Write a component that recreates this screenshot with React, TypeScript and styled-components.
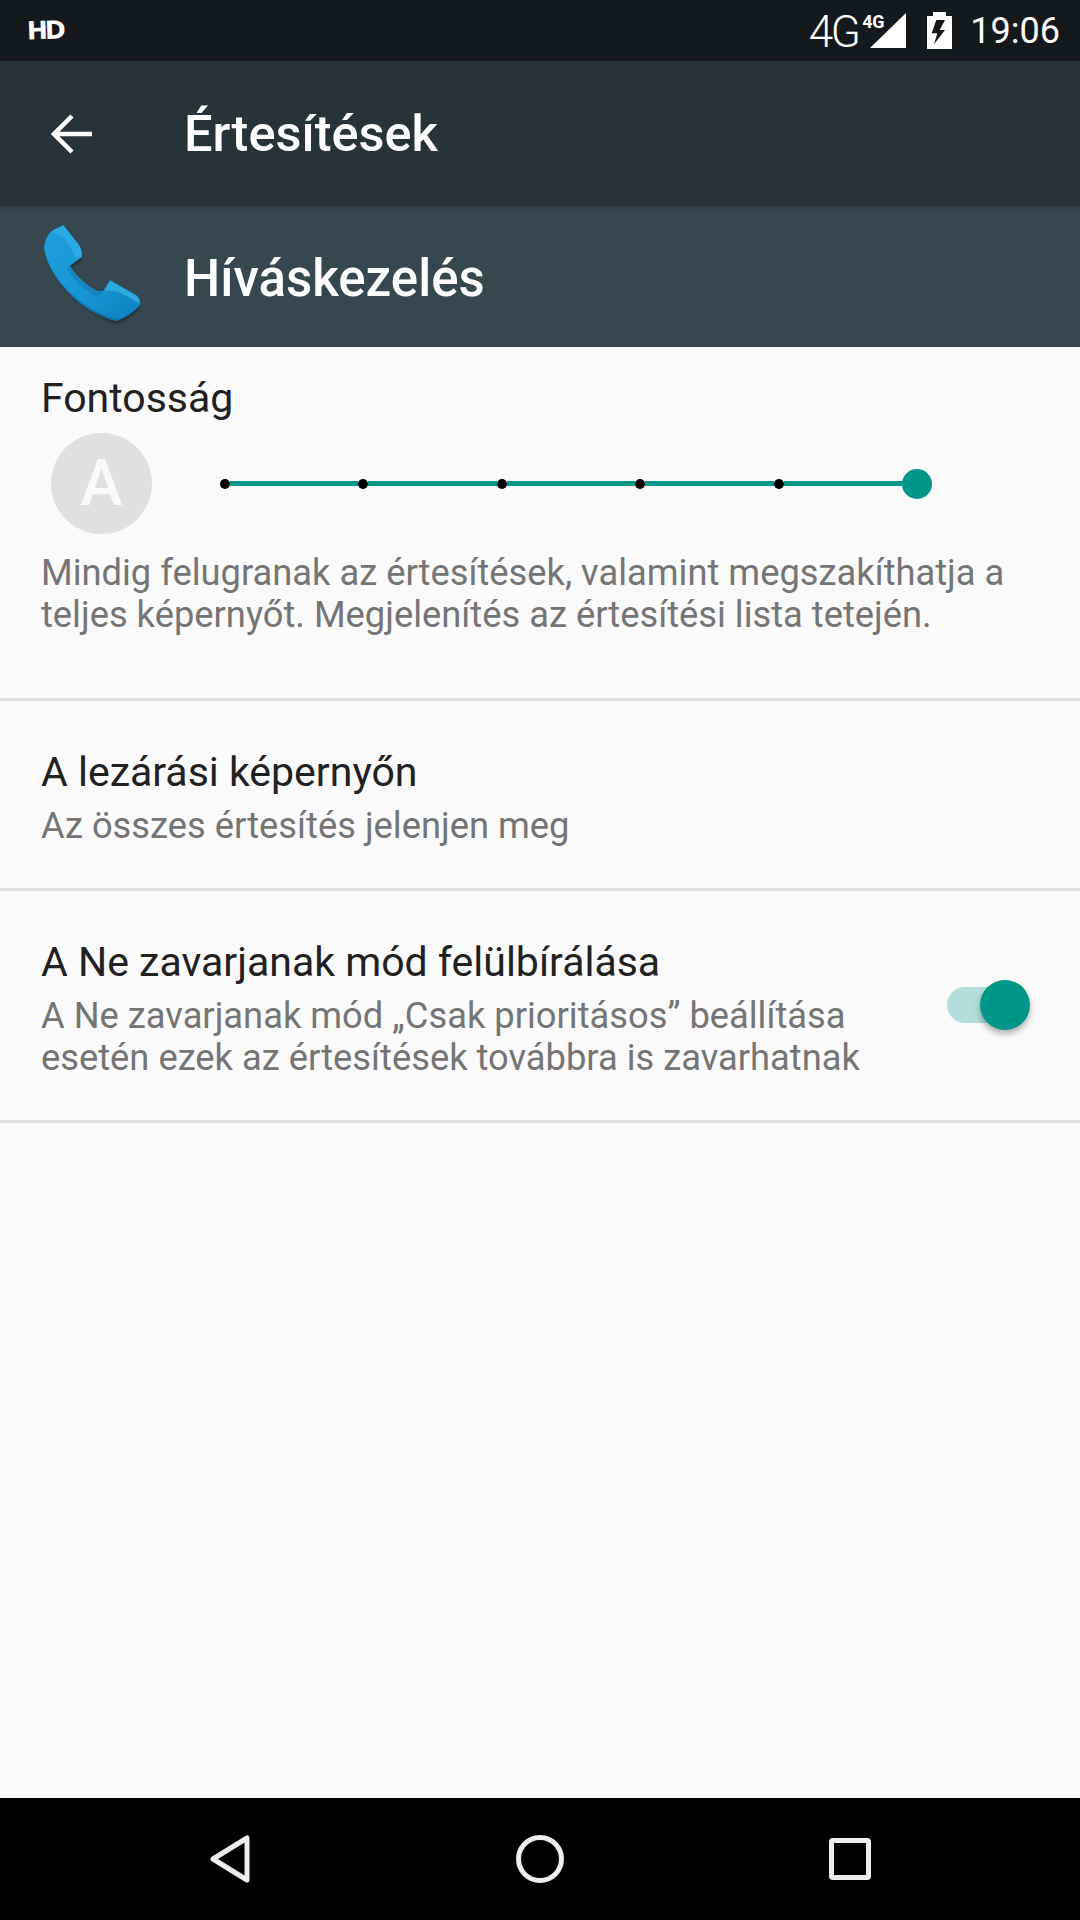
import styled, { createGlobalStyle } from "styled-components";

const GlobalStyle = createGlobalStyle`
  html, body {
    margin: 0;
    padding: 0;
    background: #fafafa;
    font-family: Roboto, "Noto Sans", sans-serif;
  }
`;

export default function App() {
  return (
    <>
      <GlobalStyle />
      <Screen>
        <StatusBar>
          <HdBadge>HD</HdBadge>
          <StatusRight>
            <NetworkLabel>4G</NetworkLabel>
            <SignalGroup>
              <SmallNetwork>4G</SmallNetwork>
              <svg width="36" height="35" viewBox="0 0 36 35">
                <path d="M36 0V35H0Z" fill="#fff" />
              </svg>
            </SignalGroup>
            <BatteryIcon viewBox="0 0 25 37" width="25" height="37">
              <path d="M6 0h13v4h6v33H0V4h6Z" fill="#fff" />
              <path d="M9.3 8H18l-5.3 10H18L7 32.3 10.3 21.3H4.7Z" fill="#15191c" />
            </BatteryIcon>
            <Clock>19:06</Clock>
          </StatusRight>
        </StatusBar>

        <Toolbar>
          <BackSlot>
            <svg width="42" height="42" viewBox="0 0 42 42">
              <path d="M41 21H4M21 3 3 21l18 18" fill="none" stroke="#fff" strokeWidth="4.5" />
            </svg>
          </BackSlot>
          <Title>Értesítések</Title>
        </Toolbar>

        <AppHeader>
          <PhoneSlot>
            <PhoneIcon />
          </PhoneSlot>
          <AppName>Híváskezelés</AppName>
        </AppHeader>

        <ImportanceSection>
          <RowTitle>Fontosság</RowTitle>
          <SliderRow>
            <Avatar>A</Avatar>
            <Slider>
              <Dot />
              <Segment />
              <Dot />
              <Segment />
              <Dot />
              <Segment />
              <Dot />
              <Segment />
              <Dot />
              <Segment />
              <Thumb />
            </Slider>
          </SliderRow>
          <ImportanceSummary>
            Mindig felugranak az értesítések, valamint megszakíthatja a teljes képernyőt. Megjelenítés az értesítési lista tetején.
          </ImportanceSummary>
        </ImportanceSection>

        <PlainRow>
          <RowTitle>A lezárási képernyőn</RowTitle>
          <RowSummary>Az összes értesítés jelenjen meg</RowSummary>
        </PlainRow>

        <SwitchRow>
          <SwitchText>
            <RowTitle>A Ne zavarjanak mód felülbírálása</RowTitle>
            <RowSummary>
              A Ne zavarjanak mód „Csak prioritásos” beállítása esetén ezek az értesítések továbbra is zavarhatnak
            </RowSummary>
          </SwitchText>
          <SwitchTrack>
            <SwitchThumb />
          </SwitchTrack>
        </SwitchRow>

        <Spacer />

        <NavBar>
          <svg width="42" height="50" viewBox="0 0 42 50">
            <path d="M38 4v42L4 25Z" fill="none" stroke="#eee" strokeWidth="5" strokeLinejoin="round" />
          </svg>
          <svg width="48" height="48" viewBox="0 0 48 48">
            <circle cx="24" cy="24" r="21.5" fill="none" stroke="#eee" strokeWidth="5" />
          </svg>
          <svg width="42" height="42" viewBox="0 0 42 42">
            <rect x="2.5" y="2.5" width="37" height="37" rx="1.5" fill="none" stroke="#eee" strokeWidth="5" />
          </svg>
        </NavBar>
      </Screen>
    </>
  );
}

// handset outline traced in 345-unit space over a 115px box
function PhoneIcon() {
  return (
    <svg width="115" height="115" viewBox="0 0 345 345">
      <defs>
        <linearGradient id="handset" x1="0" y1="0" x2="1" y2="1">
          <stop offset="0" stopColor="#1f9fdc" />
          <stop offset="0.55" stopColor="#1896d4" />
          <stop offset="1" stopColor="#0e7fbd" />
        </linearGradient>
        <filter id="soft" x="-20%" y="-20%" width="140%" height="140%">
          <feGaussianBlur stdDeviation="5" />
        </filter>
      </defs>
      <path
        d="M85 28 C70 36 52 44 44 52 C32 70 30 92 36 114 C52 172 92 222 146 262 C178 284 212 304 245 314 C272 304 300 284 318 266 L222 196 L205 222 L180 218 C152 200 128 176 108 148 L142 122 L132 80Z"
        fill="#000"
        opacity="0.35"
        filter="url(#soft)"
      />
      <path
        d="M85 18 C70 26 52 32 44 42 C32 58 26 76 28 92 C38 150 78 204 132 250 C164 276 205 298 245 306 C272 296 300 278 316 256 C316 246 312 236 304 228 L225 183 L205 215 C196 218 188 216 180 212 C150 194 124 170 105 140 L140 115 C142 100 138 88 130 75Z"
        fill="url(#handset)"
      />
      <path d="M85 20 C70 26 56 33 47 42 C58 42 72 44 84 54 C98 70 112 92 122 116 L140 113 C142 100 138 88 130 75Z" fill="#2babe3" />
      <path d="M226 185 L304 230 C312 238 316 246 314 254 C296 244 262 222 240 216 C228 216 218 214 208 214Z" fill="#2da9e0" />
      <path d="M105 142 C124 172 150 196 180 214 C188 218 196 220 205 216 C196 228 186 232 176 228 C146 212 118 184 96 150Z" fill="#1577ad" opacity="0.55" />
      <path d="M245 306 C272 296 300 278 316 256 C306 276 276 296 248 300 C208 292 168 272 132 244 C78 200 40 148 30 96 C38 150 78 204 132 250 C164 276 205 298 245 306Z" fill="#0c6ea6" opacity="0.7" />
    </svg>
  );
}

const Screen = styled.div`
  width: 1080px;
  height: 1920px;
  display: flex;
  flex-direction: column;
  overflow: hidden;
  background: #fafafa;
`;

const StatusBar = styled.div`
  height: 61px;
  flex: none;
  display: flex;
  align-items: center;
  justify-content: space-between;
  padding: 0 20px 0 27px;
  box-sizing: border-box;
  background: #15191c;
  color: #fff;
`;

const HdBadge = styled.div`
  font-family: "DejaVu Sans", sans-serif;
  font-size: 25px;
  font-weight: 700;
  line-height: 26px;
  letter-spacing: -3px;
  transform: rotate(-2deg);
`;

const StatusRight = styled.div`
  display: flex;
  align-items: center;
`;

const NetworkLabel = styled.div`
  font-size: 44px;
  font-weight: 300;
  letter-spacing: -2.5px;
  line-height: 40px;
  margin-top: 3px;
`;

const SignalGroup = styled.div`
  position: relative;
  display: flex;
  justify-content: flex-end;
  width: 47px;
  height: 36px;
  margin-left: 1px;
`;

const SmallNetwork = styled.div`
  position: absolute;
  left: 3px;
  top: 0;
  font-size: 18px;
  font-weight: 700;
  letter-spacing: -0.5px;
  line-height: 18px;
`;

const BatteryIcon = styled.svg`
  margin-left: 21px;
`;

const Clock = styled.div`
  margin-left: 18px;
  font-size: 36px;
  line-height: 40px;
`;

const Toolbar = styled.div`
  height: 145px;
  flex: none;
  display: flex;
  align-items: center;
  background: #283339;
`;

const BackSlot = styled.div`
  width: 184px;
  flex: none;
  padding-left: 51px;
  box-sizing: border-box;
  display: flex;
  align-items: center;
`;

const Title = styled.div`
  font-size: 50.5px;
  font-weight: 500;
  color: #fff;
`;

const AppHeader = styled.div`
  height: 141px;
  flex: none;
  display: flex;
  align-items: center;
  background: #37474f;
  box-shadow: inset 0 8px 8px -8px rgba(0, 0, 0, 0.25);
`;

const PhoneSlot = styled.div`
  width: 184px;
  height: 115px;
  flex: none;
  padding-left: 35px;
  box-sizing: border-box;
`;

const AppName = styled.div`
  padding-top: 3px;
  font-size: 51px;
  font-weight: 500;
  color: #fff;
`;

const ImportanceSection = styled.div`
  height: 354px;
  flex: none;
  padding: 27px 41px 0;
  box-sizing: border-box;
  border-bottom: 3px solid #e0e0e0;
`;

const RowTitle = styled.div`
  font-size: 41px;
  line-height: 48px;
  color: #212121;
`;

const RowSummary = styled.div`
  margin-top: 9px;
  font-size: 36.3px;
  line-height: 42px;
  color: #757575;
`;

const ImportanceSummary = styled(RowSummary)`
  margin-top: 0;
`;

const SliderRow = styled.div`
  display: flex;
  align-items: center;
  height: 101px;
  margin: 11px 0 18px 10px;
`;

const Avatar = styled.div`
  width: 101px;
  height: 101px;
  flex: none;
  border-radius: 50%;
  background: #e0e0e0;
  color: #fafafa;
  font-size: 64px;
  font-weight: 500;
  display: flex;
  align-items: center;
  justify-content: center;
`;

const Slider = styled.div`
  display: flex;
  align-items: center;
  width: 702px;
  margin-left: 68px;
`;

const Dot = styled.div`
  width: 10px;
  height: 10px;
  flex: none;
  border-radius: 50%;
  background: #000;
`;

const Segment = styled.div`
  flex: 1;
  height: 5px;
  background: #009688;
`;

const Thumb = styled.div`
  width: 30px;
  height: 30px;
  flex: none;
  margin: 0 -10px;
  border-radius: 50%;
  background: #009688;
`;

const PlainRow = styled.div`
  height: 190px;
  flex: none;
  padding: 47px 41px 0;
  box-sizing: border-box;
  border-bottom: 3px solid #e0e0e0;
`;

const SwitchRow = styled.div`
  height: 232px;
  flex: none;
  display: flex;
  align-items: flex-start;
  justify-content: space-between;
  padding: 47px 57px 0 41px;
  box-sizing: border-box;
  border-bottom: 3px solid #e0e0e0;
`;

const SwitchText = styled.div`
  width: 840px;
`;

const SwitchTrack = styled.div`
  position: relative;
  width: 76px;
  height: 36px;
  margin-top: 49px;
  flex: none;
  border-radius: 18px;
  background: #b2dfdb;
`;

const SwitchThumb = styled.div`
  position: absolute;
  right: -7px;
  top: -7px;
  width: 50px;
  height: 50px;
  border-radius: 50%;
  background: #009688;
  box-shadow: 0 4px 6px rgba(0, 0, 0, 0.3);
`;

const Spacer = styled.div`
  flex: 1;
`;

const NavBar = styled.div`
  height: 122px;
  flex: none;
  display: flex;
  align-items: center;
  justify-content: space-between;
  padding: 0 209px;
  background: #000;
`;
